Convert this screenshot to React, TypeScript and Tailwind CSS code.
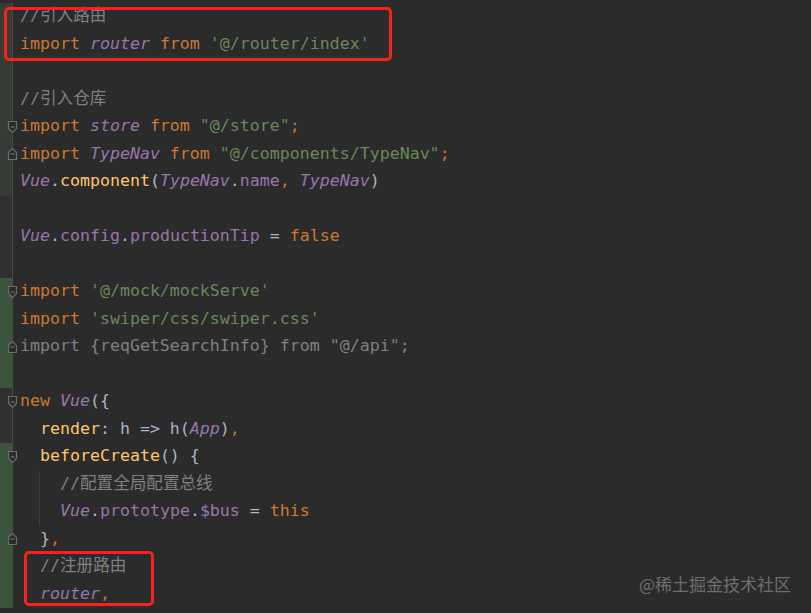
import React from 'react'

type Seg = [string, string]

const kw = 'text-[#cc7832]'
const str = 'text-[#6a8759]'
const gv = 'text-[#9876aa] italic'
const fld = 'text-[#9876aa]'
const fn = 'text-[#ffc66d]'
const df = 'text-[#a9b7c6]'
const cm = 'text-[#808080]'

// gutter: 'g1' dim change, 'g2' added, '' none; fold: 's' start, 'e' end
const lines: { segs: Seg[]; gut: string; fold?: 's' | 'e'; guide?: boolean }[] = [
    { segs: [['//引入路由', cm]], gut: 'g1' },
    { segs: [['import ', kw], ['router', gv], [' from ', kw], ["'@/router/index'", str]], gut: 'g1' },
    { segs: [], gut: 'g1' },
    { segs: [['//引入仓库', cm]], gut: 'g1' },
    { segs: [['import ', kw], ['store', gv], [' from ', kw], ['"@/store"', str], [';', kw]], gut: 'g1', fold: 's' },
    { segs: [['import ', kw], ['TypeNav', gv], [' from ', kw], ['"@/components/TypeNav"', str], [';', kw]], gut: 'g1', fold: 'e' },
    { segs: [['Vue', gv], ['.', df], ['component', fn], ['(', df], ['TypeNav', gv], ['.', df], ['name', fld], [', ', kw], ['TypeNav', gv], [')', df]], gut: 'g1' },
    { segs: [], gut: '' },
    { segs: [['Vue', gv], ['.', df], ['config', fld], ['.', df], ['productionTip', fld], [' = ', df], ['false', kw]], gut: '' },
    { segs: [], gut: '' },
    { segs: [['import ', kw], ["'@/mock/mockServe'", str]], gut: 'g2', fold: 's' },
    { segs: [['import ', kw], ["'swiper/css/swiper.css'", str]], gut: 'g2' },
    { segs: [['import {reqGetSearchInfo} from "@/api";', cm]], gut: 'g2', fold: 'e' },
    { segs: [], gut: 'g2' },
    { segs: [['new ', kw], ['Vue', gv], ['({', df]], gut: '', fold: 's' },
    { segs: [['  ', df], ['render', fn], [': h => h(', df], ['App', gv], [')', df], [',', kw]], gut: '' },
    { segs: [['  ', df], ['beforeCreate', fn], ['() {', df]], gut: 'g2', fold: 's' },
    { segs: [['    ', df], ['//配置全局配置总线', cm]], gut: 'g2', guide: true },
    { segs: [['    ', df], ['Vue', gv], ['.', df], ['prototype', fld], ['.', df], ['$bus', fld], [' = ', df], ['this', kw]], gut: 'g2', guide: true },
    { segs: [['  ', df], ['}', df], [',', kw]], gut: 'g2', fold: 'e' },
    { segs: [['  ', df], ['//注册路由', cm]], gut: 'g2' },
    { segs: [['  ', df], ['router', gv], [',', kw]], gut: 'g2' },
]

function Fold({ kind }: { kind: 's' | 'e' }) {
    return (
        <svg width="11" height="14" viewBox="0 0 11 14" className="absolute left-[7px] top-1/2 -translate-y-1/2">
            {kind === 's' ? (
                <path d="M1.5 1.5 H9.5 V8.5 L5.5 12.5 L1.5 8.5 Z" fill="#2b2b2b" stroke="#6b6e70" strokeWidth="1.2" />
            ) : (
                <path d="M1.5 12.5 H9.5 V5.5 L5.5 1.5 L1.5 5.5 Z" fill="#2b2b2b" stroke="#6b6e70" strokeWidth="1.2" />
            )}
            <path d="M3.5 7 H7.5" stroke="#6b6e70" strokeWidth="1.2" />
        </svg>
    )
}

export default function App() {
    return (
        <div
            className="relative w-[811px] h-[613px] overflow-hidden bg-[#2b2b2b] pt-[3px]"
            style={{ fontFamily: '"DejaVu Sans Mono", "Noto Sans CJK SC", monospace' }}
        >
            {lines.map((ln, i) => (
                <div key={i} className="relative flex h-[27.5px] items-center">
                    <div
                        className={
                            'self-stretch w-[13px] shrink-0 border-r border-[#4a4a4a] ' +
                            (ln.gut === 'g2' ? 'bg-[#3c533c]' : ln.gut === 'g1' ? 'bg-[#353c35]' : 'bg-[#303030]')
                        }
                    />
                    {ln.fold && <Fold kind={ln.fold} />}
                    {ln.guide && <div className="absolute left-[39px] top-0 bottom-0 w-px bg-[#3e3e3e]" />}
                    <pre className="pl-[7px] text-[16.6px] leading-none" style={{ fontFamily: 'inherit' }}>
                        {ln.segs.map(([t, c], j) => (
                            <span key={j} className={c}>{t}</span>
                        ))}
                    </pre>
                </div>
            ))}

            {/* annotation boxes */}
            <div className="absolute left-[4px] top-[7px] w-[388px] h-[54px] rounded-[5px] border-[3px] border-[#f5231c]" />
            <div className="absolute left-[24px] top-[551px] w-[130px] h-[55px] rounded-[5px] border-[3px] border-[#f5231c]" />

            {/* watermark */}
            <div
                className="absolute right-[20px] top-[571px] text-[17px] text-[#6e6e6e]"
                style={{ fontFamily: '"Noto Sans CJK SC", sans-serif' }}
            >
                @稀土掘金技术社区
            </div>
        </div>
    )
}
